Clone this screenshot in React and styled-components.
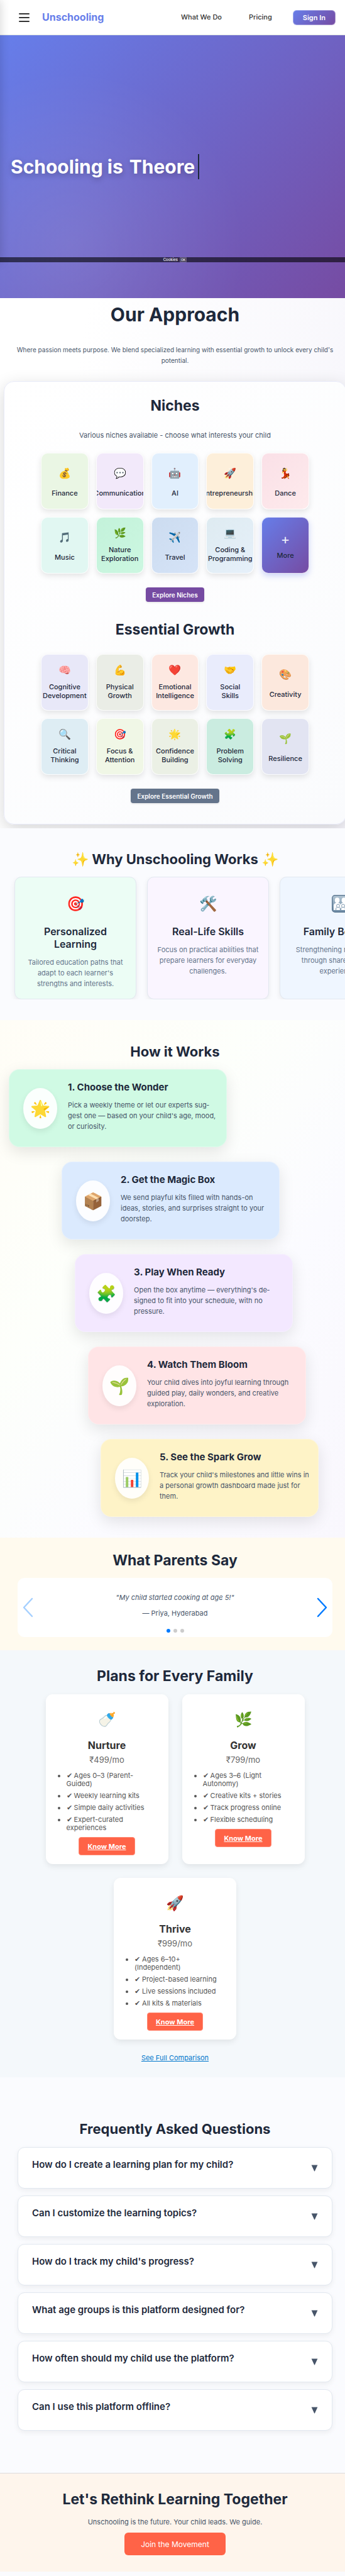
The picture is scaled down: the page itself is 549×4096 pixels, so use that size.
import React, { useState } from "react";
import styled, { createGlobalStyle, css } from "styled-components";

const ink = "#1e293b";
const slate = "#475569";
const muted = "#64748b";
const coral = "#ff6347";
const brand = "linear-gradient(135deg, #667eea 0%, #764ba2 100%)";

const GlobalStyle = createGlobalStyle`
  *, *::before, *::after { box-sizing: border-box; }
  body {
    margin: 0;
    background: #fafbfe;
    color: ${ink};
    font-family: Inter, "Liberation Sans", sans-serif;
    font-size: 11px;
    line-height: 17px;
  }
  h1, h2, h3, p, ul { margin: 0; padding: 0; }
  button { font: inherit; cursor: pointer; border: 0; }
`;

const Viewport = styled.div`
  position: relative;
  overflow: hidden;
  padding-bottom: 7px;
`;

const Page = styled.div`
  width: calc(100% + 8px);
`;

/* Edge of the closed side drawer, whose shadow falls on the page */
const DrawerEdge = styled.div`
  position: absolute;
  z-index: 5;
  top: 0;
  left: -20px;
  width: 20px;
  height: 417px;
  box-shadow: 0 0 16px rgba(0, 0, 0, 0.18);
`;

/* ---------- Header ---------- */

const Header = styled.header`
  display: flex;
  align-items: center;
  height: 56px;
  padding: 0 23px 0 30px;
  background: #fff;
  border-bottom: 1px solid #e2e8e2;
`;

const MenuButton = styled.button`
  display: flex;
  flex-direction: column;
  gap: 4px;
  width: 17px;
  padding: 0;
  margin-right: 20px;
  background: none;

  span {
    height: 2px;
    border-radius: 1px;
    background: #333;
  }
`;

const Logo = styled.a`
  margin-right: auto;
  font-size: 16px;
  font-weight: 700;
  color: #667eea;
  text-decoration: none;
`;

const NavLinks = styled.nav`
  display: flex;
  align-items: center;
  gap: 43px;
  margin-right: 33px;
`;

const NavLink = styled.a`
  font-weight: 500;
  color: #333;
  text-decoration: none;
`;

const SignIn = styled.button`
  height: 24px;
  padding: 0 15px;
  border: 1px solid rgba(255, 255, 255, 0.4);
  border-radius: 6px;
  background: ${brand} border-box;
  color: #fff;
  font-size: 11px;
  font-weight: 600;
  line-height: 14px;
`;

/* ---------- Hero ---------- */

const Hero = styled.section`
  position: relative;
  height: 418px;
  padding: 189px 17px 0;
  background:
    radial-gradient(circle at 20% 80%, rgba(255, 255, 255, 0.1) 0%, transparent 50%),
    ${brand};
`;

const HeroTitle = styled.h1`
  display: flex;
  align-items: center;
  gap: 10px;
  height: 40px;
  color: #fff;
  font-size: 30px;
  font-weight: 700;
  line-height: 40px;
  text-shadow: 0 3px 10px rgba(0, 0, 0, 0.25);
`;

const Typed = styled.span`
  height: 40px;
  padding-right: 5px;
  border-right: 2px solid ${ink};
`;

const CookieBar = styled.div`
  position: absolute;
  left: 0;
  right: 0;
  bottom: 57px;
  display: flex;
  align-items: center;
  justify-content: center;
  gap: 3px;
  height: 8px;
  background: rgba(0, 0, 0, 0.6);
  color: #fff;
  font-size: 6px;
  font-weight: 500;
  line-height: 8px;

  button {
    height: 8px;
    padding: 0 1px;
    border: 1px solid rgba(255, 255, 255, 0.2);
    border-radius: 1px;
    background: rgba(255, 255, 255, 0.1);
    color: #fff;
    font-size: 5px;
    line-height: 6px;
  }
`;

/* ---------- Shared ---------- */

const Heading = styled.h2`
  color: ${ink};
  font-size: ${(p) => p.$size || 23}px;
  font-weight: 700;
  line-height: 28px;
  text-align: center;
`;

/* ---------- Approach ---------- */

const Approach = styled.section`
  overflow: hidden;
  padding: 8px 6px 6px;
  background: linear-gradient(100deg, #fff 20%, #f6f5fb 100%);
`;

const ApproachTitle = styled.h2`
  color: ${ink};
  font-size: 30px;
  font-weight: 700;
  line-height: 36px;
  text-align: center;
`;

const Lead = styled.p`
  margin-top: 30px;
  color: ${slate};
  font-size: 10px;
  line-height: 17px;
  text-align: center;
`;

const Panel = styled.div`
  display: flex;
  flex-direction: column;
  align-items: center;
  margin-top: 24px;
  padding: 24px 16px 33px;
  border: 1px solid #e8eaf8;
  border-radius: 16px;
  background: linear-gradient(135deg, #fff 0%, #fafbfd 100%);
  box-shadow: 0 8px 28px rgba(0, 0, 0, 0.16);
`;

const PanelNote = styled.p`
  margin: 25px 0 19px;
  color: ${slate};
`;

const TileGrid = styled.div`
  display: grid;
  grid-template-columns: repeat(5, minmax(0, 1fr));
  gap: 12px;
  width: 84%;
  max-width: 427px;
`;

const Tile = styled.div`
  display: flex;
  flex-direction: column;
  align-items: center;
  justify-content: center;
  height: 90px;
  overflow: hidden;
  border: 1px solid rgba(255, 255, 255, 0.8);
  border-radius: 11px;
  background: ${(p) => p.$bg};
  box-shadow: 0 4px 10px ${(p) => p.$shadow || "rgba(0, 0, 0, 0.1)"};
`;

const TileIcon = styled.span`
  font-size: 16px;
  line-height: 24px;
`;

const TileLabel = styled.span`
  margin-top: 13px;
  font-weight: 500;
  line-height: 14px;
  text-align: center;
  white-space: pre-line;

  ${(p) =>
    p.$tall &&
    css`
      margin-top: 8px;
      padding-bottom: 4px;
    `}
`;

const PlusSign = styled.span`
  color: rgba(255, 255, 255, 0.9);
  font-size: 22px;
  font-weight: 400;
  line-height: 24px;

  & + span {
    margin-top: 7px;
  }
`;

const ExploreButton = styled.button`
  height: 23px;
  margin-top: 22px;
  padding: 0 10px;
  border-radius: 4px;
  background: ${(p) => p.$bg};
  box-shadow: 0 1px 3px rgba(0, 0, 0, 0.12);
  color: #fff;
  font-size: 10px;
  font-weight: 600;
  line-height: 14px;

  & + h2 {
    margin: 30px 0 25px;
  }
`;

/* ---------- Why ---------- */

const Why = styled.section`
  overflow: hidden;
  padding: 35px 0 33px 23px;
  background: #fafbfe;

  h2 {
    padding-right: 23px;
  }
`;

const Reel = styled.div`
  display: flex;
  gap: 17px;
  margin-top: 14px;
  margin-left: -12px;
  padding: 0 12px;
  overflow: hidden;
`;

const ReasonCard = styled.article`
  display: flex;
  flex: 0 0 194px;
  flex-direction: column;
  align-items: center;
  height: 195px;
  padding: 24px 14px 0;
  border: 1px solid #e2e8f0;
  border-radius: 11px;
  background: ${(p) => p.$bg};
  box-shadow: 0 3px 8px rgba(0, 0, 0, 0.07);
  text-align: center;

  h3 {
    margin-top: 16px;
    font-size: 16px;
    font-weight: 600;
    line-height: 20px;
  }

  p {
    margin-top: 11px;
    color: ${muted};
  }
`;

const ReasonIcon = styled.span`
  display: flex;
  align-items: center;
  height: 36px;
  font-size: 23px;
`;

/* ---------- How ---------- */

const How = styled.section`
  display: flex;
  flex-direction: column;
  padding: 36px 14px 33px;
  background: linear-gradient(125deg, #fffdf6 0%, #fdfffb 35%, #fbfbff 65%, #f9f7fd 100%);
`;

const Steps = styled.ol`
  display: flex;
  flex-direction: column;
  gap: 23px;
  margin: 14px 0 0;
  padding: 0;
  list-style: none;
`;

const Step = styled.li`
  display: flex;
  gap: 17px;
  width: 347px;
  height: 124px;
  margin-left: ${(p) => p.$indent}px;
  padding: 19px 12px 0 22px;
  border: 1px solid rgba(255, 255, 255, 0.3);
  border-radius: 17px;
  background: ${(p) => p.$bg} border-box;
  box-shadow: 0 8px 24px rgba(0, 0, 0, 0.1);

  h3 {
    font-size: 15px;
    font-weight: 700;
    line-height: 18px;
  }

  p {
    margin-top: 11px;
    color: ${slate};
  }
`;

const StepIcon = styled.span`
  display: flex;
  flex: 0 0 54px;
  align-items: center;
  justify-content: center;
  height: 65px;
  margin-top: 10px;
  border-radius: 50%;
  background: rgba(255, 255, 255, 0.9);
  box-shadow: 0 4px 10px rgba(0, 0, 0, 0.08);
  font-size: 26px;
`;

/* ---------- Testimonials ---------- */

const Parents = styled.section`
  padding: 22px 28px 21px;
  background: #fffaee;
`;

const Slider = styled.div`
  display: flex;
  align-items: center;
  justify-content: space-between;
  height: 94px;
  margin-top: 14px;
  padding: 0 8px;
  border-radius: 11px;
  background: #fff;
`;

const Arrow = styled.button`
  display: flex;
  align-items: center;
  padding: 0;
  background: none;
  opacity: ${(p) => (p.disabled ? 0.35 : 1)};
`;

const Quote = styled.figure`
  display: flex;
  flex-direction: column;
  align-items: center;
  align-self: stretch;
  margin: 0;
  padding-top: 23px;
  color: ${slate};

  blockquote {
    margin: 0;
    font-style: italic;
  }

  figcaption {
    margin-top: 8px;
  }
`;

const Dots = styled.div`
  display: flex;
  gap: 5px;
  margin-top: 16px;
`;

const Dot = styled.button`
  width: 6px;
  height: 6px;
  padding: 0;
  border-radius: 50%;
  background: ${(p) => (p.$on ? "#007aff" : "#ccc")};
`;

/* ---------- Plans ---------- */

const Plans = styled.section`
  display: flex;
  flex-direction: column;
  align-items: center;
  padding: 27px 60px 22px;
  background: #f4f8fb;
`;

const PlanList = styled.div`
  display: flex;
  flex-wrap: wrap;
  justify-content: center;
  gap: 22px;
  margin-top: 15px;
`;

const Plan = styled.article`
  display: flex;
  flex-direction: column;
  align-items: center;
  width: 195px;
  padding: 22px 22px 14px;
  border-radius: 11px;
  background: #fff;
  box-shadow: 0 4px 10px rgba(0, 0, 0, 0.08);

  h3 {
    margin-top: 13px;
    color: #333;
    font-size: 16px;
    font-weight: 700;
    line-height: 20px;
  }
`;

const PlanIcon = styled.span`
  font-size: 23px;
  line-height: 36px;
`;

const Price = styled.p`
  margin-top: 5px;
  color: #666;
  font-size: 13px;
  line-height: 16px;
`;

const Features = styled.ul`
  align-self: stretch;
  margin-top: 11px;
  padding-left: 11px;
  color: #555;
  line-height: 13px;

  li {
    margin-bottom: 6px;
  }
`;

const KnowMore = styled.a`
  height: 29px;
  margin-top: 2px;
  padding: 0 13px;
  border: 1px solid #ff8a75;
  border-radius: 4px;
  background: ${coral};
  color: #fff;
  font-weight: 700;
  line-height: 28px;
`;

const Compare = styled.a`
  margin-top: 21px;
  color: #0077cc;
`;

/* ---------- FAQ ---------- */

const Faq = styled.section`
  padding: 68px 28px 67px;
  background: #fafbfe;
`;

const FaqList = styled.div`
  display: flex;
  flex-direction: column;
  gap: 11px;
  margin-top: 15px;
`;

const Question = styled.button`
  display: flex;
  justify-content: space-between;
  height: 66px;
  padding: 17px 22px 0;
  border: 1px solid #e2e8f0;
  border-radius: 11px;
  background: #fff;
  box-shadow: 0 3px 8px rgba(0, 0, 0, 0.06);
  color: ${ink};
  font-size: 15px;
  font-weight: 600;
  line-height: 20px;
  text-align: left;

  svg {
    margin-top: 10px;
  }
`;

/* ---------- Call to action ---------- */

const Closing = styled.footer`
  display: flex;
  flex-direction: column;
  align-items: center;
  padding: 27px 20px 26px;
  border-top: 1px solid #dcdcdc;
  background: #fef5ec;

  p {
    margin: 14px 0 8px;
    color: ${slate};
  }
`;

const Join = styled.button`
  height: 36px;
  padding: 0 26px;
  border-radius: 6px;
  background: ${coral};
  color: #fff;
  font-size: 12px;
`;

/* Family sign: white silhouettes on a steel-blue plate */
function FamilyIcon() {
  return (
    <svg width="28" height="28" viewBox="0 0 28 28" aria-label="Family">
      <defs>
        <linearGradient id="plate" x1="0" y1="0" x2="0" y2="1">
          <stop offset="0" stopColor="#b3c6d4" />
          <stop offset="1" stopColor="#6d8ba5" />
        </linearGradient>
      </defs>
      <rect x="0.6" y="0.6" width="26.8" height="26.8" rx="4.5" fill="url(#plate)" stroke="#56728c" strokeWidth="1.2" />
      <g fill="#fff">
        <ellipse cx="8.6" cy="8.6" rx="3.8" ry="4.4" />
        <ellipse cx="19.4" cy="8.6" rx="3.8" ry="4.4" />
        <path d="M3 24V17c0-3 2-4.6 5.6-4.6S14 14 14 16c0-2 1.8-3.6 5.4-3.6S25 14 25 17v7Z" />
      </g>
      <g fill="#fff" stroke="#6f8da7" strokeWidth="0.9">
        <path d="M6.6 24.5v-2.6c0-1.700 1.300-2.400 3.400-2.400s3.400.7 3.400 2.400v2.600ZM14.600 24.500v-2.600c0-1.700 1.300-2.400 3.400-2.400s3.400.7 3.400 2.400v2.600Z" />
        <circle cx="10" cy="17.4" r="2.5" />
        <circle cx="18" cy="17.4" r="2.5" />
      </g>
    </svg>
  );
}

const niches = [
  ["💰", "Finance", "#eaf6e4"],
  ["💬", "Communication", "#f2e9fa"],
  ["🤖", "AI", "#e1effd"],
  ["🚀", "Entrepreneurship", "#fdefda"],
  ["💃", "Dance", "linear-gradient(135deg, #fae0e7, #feeaec)"],
  ["🎵", "Music", "#e1f7f2"],
  ["🌿", "Nature\nExploration", "linear-gradient(135deg, #c3f2da, #ccf7e1)", true],
  ["✈️", "Travel", "linear-gradient(135deg, #ccdcf0, #d5e3f7)"],
  ["💻", "Coding &\nProgramming", "linear-gradient(135deg, #deebf1, #e6f0fa)", true],
];

const growth = [
  ["🧠", "Cognitive\nDevelopment", "#e8e8f8", true],
  ["💪", "Physical\nGrowth", "#eaede6", true],
  ["❤️", "Emotional\nIntelligence", "#fde8e1", true],
  ["🤝", "Social\nSkills", "#e9ecfc", true],
  ["🎨", "Creativity", "#fce8dd"],
  ["🔍", "Critical\nThinking", "#deedf4", true],
  ["🎯", "Focus &\nAttention", "#f0f7e6", true],
  ["🌟", "Confidence\nBuilding", "#ebf0e5", true],
  ["🧩", "Problem\nSolving", "#caece0", true],
  ["🌱", "Resilience", "#e2e4f2"],
];

const reasons = [
  ["🎯", "Personalized Learning", "Tailored education paths that adapt to each learner's strengths and interests.", "#ecfdf5"],
  ["🛠️", "Real-Life Skills", "Focus on practical abilities that prepare learners for everyday challenges.", "#faf5ff"],
  [<FamilyIcon key="family" />, "Family Bonding", "Strengthening relationships through shared learning experiences.", "#eff6ff"],
];

const steps = [
  ["🌟", "Choose the Wonder", "Pick a weekly theme or let our experts sug\u00adgest one — based on your child's age, mood, or curiosity.", "#d0fae4", 0],
  ["📦", "Get the Magic Box", "We send playful kits filled with hands-on ideas, stories, and surprises straight to your doorstep.", "#dbeafe", 84],
  ["🧩", "Play When Ready", "Open the box anytime — everything's de\u00adsigned to fit into your schedule, with no pressure.", "#f3e8ff", 105],
  ["🌱", "Watch Them Bloom", "Your child dives into joyful learning through guided play, daily wonders, and creative exploration.", "#ffe4e6", 126],
  ["📊", "See the Spark Grow", "Track your child's milestones and little wins in a personal growth dashboard made just for them.", "#fef3c7", 146],
];

const plans = [
  ["🍼", "Nurture", "₹499/mo", ["Ages 0–3 (Parent-Guided)", "Weekly learning kits", "Simple daily activities", "Expert-curated experiences"]],
  ["🌿", "Grow", "₹799/mo", ["Ages 3–6 (Light Autonomy)", "Creative kits + stories", "Track progress online", "Flexible scheduling"]],
  ["🚀", "Thrive", "₹999/mo", ["Ages 6–10+ (Independent)", "Project-based learning", "Live sessions included", "All kits & materials"]],
];

const questions = [
  "How do I create a learning plan for my child?",
  "Can I customize the learning topics?",
  "How do I track my child's progress?",
  "What age groups is this platform designed for?",
  "How often should my child use the platform?",
  "Can I use this platform offline?",
];

function Tiles({ items, children }) {
  return (
    <TileGrid>
      {items.map(([icon, label, bg, tall]) => (
        <Tile key={label} $bg={bg}>
          <TileIcon>{icon}</TileIcon>
          <TileLabel $tall={tall}>{label}</TileLabel>
        </Tile>
      ))}
      {children}
    </TileGrid>
  );
}

function Chevron({ left }) {
  return (
    <svg width="17" height="32" viewBox="0 0 17 32" fill="none" aria-hidden="true">
      <path
        d={left ? "M15 2 2 16l13 14" : "M2 2l13 14L2 30"}
        stroke="#007aff"
        strokeWidth="2.4"
        strokeLinecap="round"
        strokeLinejoin="round"
      />
    </svg>
  );
}

export default function App() {
  const [slide, setSlide] = useState(0);

  return (
    <Viewport>
      <GlobalStyle />
      <DrawerEdge />
      <Page>
        <Header>
          <MenuButton aria-label="Open menu">
            <span />
            <span />
            <span />
          </MenuButton>
          <Logo href="#">Unschooling</Logo>
          <NavLinks>
            <NavLink href="#what">What We Do</NavLink>
            <NavLink href="#pricing">Pricing</NavLink>
          </NavLinks>
          <SignIn>Sign In</SignIn>
        </Header>

        <Hero>
          <HeroTitle>
            Schooling is <Typed>Theore</Typed>
          </HeroTitle>
          <CookieBar>
            Cookies <button>OK</button>
          </CookieBar>
        </Hero>

        <Approach id="what">
          <ApproachTitle>Our Approach</ApproachTitle>
          <Lead>
            Where passion meets purpose. We blend specialized learning with essential growth to
            unlock every child's potential.
          </Lead>
          <Panel>
            <Heading>Niches</Heading>
            <PanelNote>Various niches available - choose what interests your child</PanelNote>
            <Tiles items={niches}>
              <Tile $bg={`${brand} border-box`} $shadow="rgba(102, 126, 234, 0.3)">
                <PlusSign>+</PlusSign>
                <TileLabel>More</TileLabel>
              </Tile>
            </Tiles>
            <ExploreButton $bg="#764ba2">Explore Niches</ExploreButton>
            <Heading>Essential Growth</Heading>
            <Tiles items={growth} />
            <ExploreButton $bg="#64748b">Explore Essential Growth</ExploreButton>
          </Panel>
        </Approach>

        <Why>
          <Heading $size={22}>✨ Why Unschooling Works ✨</Heading>
          <Reel>
            {reasons.map(([icon, title, text, bg]) => (
              <ReasonCard key={title} $bg={bg}>
                <ReasonIcon>{icon}</ReasonIcon>
                <h3>{title}</h3>
                <p>{text}</p>
              </ReasonCard>
            ))}
          </Reel>
        </Why>

        <How>
          <Heading $size={22}>How it Works</Heading>
          <Steps>
            {steps.map(([icon, title, text, bg, indent], i) => (
              <Step key={title} $bg={bg} $indent={indent}>
                <StepIcon>{icon}</StepIcon>
                <div>
                  <h3>
                    {i + 1}. {title}
                  </h3>
                  <p>{text}</p>
                </div>
              </Step>
            ))}
          </Steps>
        </How>

        <Parents>
          <Heading>What Parents Say</Heading>
          <Slider>
            <Arrow aria-label="Previous" disabled={slide === 0} onClick={() => setSlide(slide - 1)}>
              <Chevron left />
            </Arrow>
            <Quote>
              <blockquote>"My child started cooking at age 5!"</blockquote>
              <figcaption>— Priya, Hyderabad</figcaption>
              <Dots>
                {[0, 1, 2].map((n) => (
                  <Dot key={n} $on={n === slide} aria-label={`Slide ${n + 1}`} onClick={() => setSlide(n)} />
                ))}
              </Dots>
            </Quote>
            <Arrow aria-label="Next" disabled={slide === 2} onClick={() => setSlide(slide + 1)}>
              <Chevron />
            </Arrow>
          </Slider>
        </Parents>

        <Plans id="pricing">
          <Heading>Plans for Every Family</Heading>
          <PlanList>
            {plans.map(([icon, name, price, features]) => (
              <Plan key={name}>
                <PlanIcon>{icon}</PlanIcon>
                <h3>{name}</h3>
                <Price>{price}</Price>
                <Features>
                  {features.map((f) => (
                    <li key={f}>✔ {f}</li>
                  ))}
                </Features>
                <KnowMore href="#plan">Know More</KnowMore>
              </Plan>
            ))}
          </PlanList>
          <Compare href="#compare">See Full Comparison</Compare>
        </Plans>

        <Faq>
          <Heading $size={22}>Frequently Asked Questions</Heading>
          <FaqList>
            {questions.map((q) => (
              <Question key={q} aria-expanded="false">
                {q}
                <svg width="11" height="11" viewBox="0 0 11 11" aria-hidden="true">
                  <path d="M0.6 0.5h9.8L5.9 10.2q-.4.7-.8 0Z" fill={slate} />
                </svg>
              </Question>
            ))}
          </FaqList>
        </Faq>

        <Closing>
          <Heading>Let's Rethink Learning Together</Heading>
          <p>Unschooling is the future. Your child leads. We guide.</p>
          <Join>Join the Movement</Join>
        </Closing>
      </Page>
    </Viewport>
  );
}
